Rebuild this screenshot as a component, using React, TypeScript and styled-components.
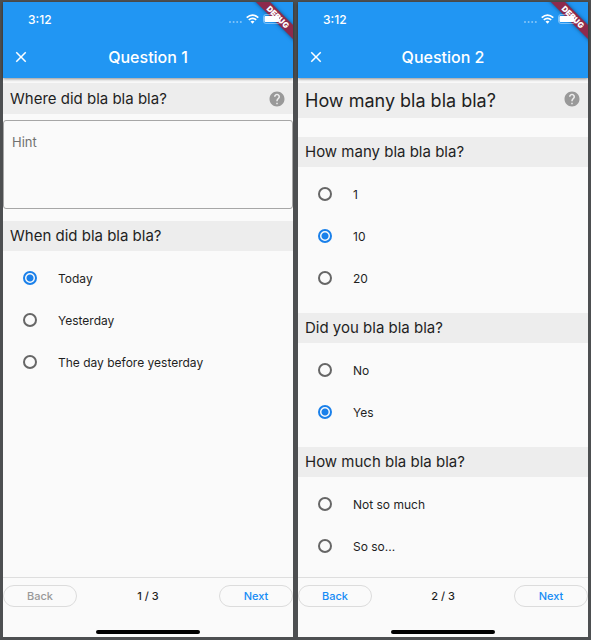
import React, { useId, useState } from "react";
import styled, { createGlobalStyle } from "styled-components";

const GlobalStyle = createGlobalStyle`
  *, *::before, *::after { box-sizing: border-box; }
  body {
    margin: 0;
    background: #4d4f51;
    color: #1f1f1f;
    font-family: Inter, "Liberation Sans", sans-serif;
  }
  button, input, textarea { font-family: inherit; }
`;

const Screens = styled.main`
  display: flex;
  gap: 5px;
  min-height: 100vh;
  padding: 2px 3px 3px;
`;

const Phone = styled.article`
  flex: 1;
  min-width: 0;
  display: flex;
  flex-direction: column;
  background: #fafafa;
`;

const Header = styled.header`
  position: relative;
  overflow: hidden;
  background: #2196f3;
  color: #fff;
`;

const HeaderShadow = styled.div`
  box-shadow: 0 1px 3px rgba(0, 0, 0, 0.45);
  margin-bottom: 5px;
`;

const StatusBar = styled.div`
  display: flex;
  justify-content: space-between;
  align-items: center;
  height: 34px;
  padding: 0 12px 0 25px;
`;

const Time = styled.time`
  font-size: 12px;
  font-weight: 500;
`;

const StatusIcons = styled.div`
  position: relative;
  z-index: 1;
  display: flex;
  align-items: center;
  gap: 4px;
`;

const DebugBanner = styled.div`
  position: absolute;
  top: 10px;
  right: -27px;
  width: 84px;
  height: 10px;
  transform: rotate(45deg);
  background: #8d2a4c;
  box-shadow: 0 0 4px rgba(0, 0, 0, 0.5);
  font-size: 8px;
  line-height: 10px;
  font-weight: 900;
  text-align: center;
`;

const AppBar = styled.div`
  display: grid;
  grid-template-columns: 36px 1fr 36px;
  align-items: center;
  height: 42px;
`;

const CloseButton = styled.button`
  display: grid;
  place-items: center;
  height: 36px;
  padding: 0;
  border: 0;
  background: none;
  color: inherit;
`;

const ScreenTitle = styled.h1`
  margin: 0;
  font-size: 16px;
  font-weight: 500;
  text-align: center;
`;

const Content = styled.div`
  flex: 1;
`;

const Bar = styled.div<{ $large?: boolean }>`
  display: flex;
  justify-content: space-between;
  align-items: center;
  min-height: ${(p) => (p.$large ? 35 : 31)}px;
  padding: 0 7px;
  background: #ededed;
`;

const BarTitle = styled.h2<{ $large?: boolean }>`
  margin: 0;
  font-size: ${(p) => (p.$large ? 18 : 15)}px;
  line-height: 20px;
  font-weight: 400;
`;

const HelpButton = styled.button`
  display: grid;
  place-items: center;
  align-self: flex-start;
  height: 31px;
  padding: 0;
  border: 0;
  background: none;
  color: #999;
`;

const Answer = styled.textarea`
  display: block;
  width: 100%;
  height: 89px;
  margin: 6px 0 12px;
  padding: 12px 8px;
  border: 1px solid #a6a6a6;
  border-radius: 3px;
  background: transparent;
  font-size: 13px;
  line-height: 18px;
  resize: none;
  &::placeholder { color: #717171; opacity: 1; }
`;

const Spacer = styled.div`
  height: 19px;
`;

const Group = styled.fieldset`
  min-width: 0;
  margin: 0;
  padding: 0 0 14px;
  border: 0;
  &:last-child { padding-bottom: 0; }
`;

const GroupTitle = styled.legend`
  display: block;
  width: 100%;
  height: 30px;
  margin-bottom: 6px;
  padding: 0 7px;
  background: #ededed;
  font-size: 15px;
  line-height: 30px;
`;

const Option = styled.label`
  display: flex;
  align-items: center;
  gap: 21px;
  height: 42px;
  padding-left: 20px;
  font-size: 12px;
`;

const Radio = styled.input`
  appearance: none;
  width: 14px;
  height: 14px;
  margin: 0;
  border: 2px solid #666;
  border-radius: 50%;
  &:checked {
    border-color: #1a80ea;
    background: radial-gradient(circle, #1a80ea 3px, transparent 4px);
  }
`;

const Footer = styled.footer`
  border-top: 1px solid #dedede;
`;

const Pager = styled.nav`
  display: grid;
  grid-template-columns: 74px 1fr 74px;
  align-items: center;
  padding-top: 7px;
`;

const PagerButton = styled.button`
  height: 22px;
  padding: 0;
  border: 1px solid #dcdcdc;
  border-radius: 11px;
  background: transparent;
  color: #168cf5;
  font-size: 11px;
  font-weight: 500;
  &:disabled { color: #999; }
`;

const PageCount = styled.span`
  font-size: 11px;
  font-weight: 500;
  text-align: center;
`;

const HomeIndicator = styled.div`
  width: 36%;
  height: 4px;
  margin: 23px auto 3px;
  border-radius: 2px;
  background: #000;
`;

function SignalIcons() {
  return (
    <StatusIcons>
      <svg width="13" height="10" viewBox="0 0 13 10" fill="#fff" opacity="0.45" aria-hidden="true">
        <circle cx="1" cy="8" r="1" />
        <circle cx="4.6" cy="8" r="1" />
        <circle cx="8.2" cy="8" r="1" />
        <circle cx="11.8" cy="8" r="1" />
      </svg>
      <svg width="13" height="10" viewBox="0 0 13 10" fill="none" stroke="#fff" strokeWidth="1.7" aria-hidden="true">
        <path d="M0.7 3.6Q6.5-1.4 12.3 3.6M2.8 5.9Q6.5 2.7 10.2 5.9" />
        <path d="M4.5 7.6Q6.5 6 8.5 7.6L6.5 9.8Z" fill="#fff" stroke="none" />
      </svg>
      <svg width="18" height="10" viewBox="0 0 18 10" aria-hidden="true">
        <rect x="0.5" y="0.5" width="17" height="9" rx="2.5" fill="none" stroke="#fff" opacity="0.4" />
        <rect x="1.5" y="2" width="14.5" height="6" rx="1" fill="#fff" />
      </svg>
    </StatusIcons>
  );
}

function TopBar({ title }: { title: string }) {
  return (
    <HeaderShadow>
      <Header>
        <StatusBar>
          <Time>3:12</Time>
          <SignalIcons />
        </StatusBar>
        <DebugBanner>DEBUG</DebugBanner>
        <AppBar>
          <CloseButton type="button" aria-label="Close">
            <svg width="18" height="18" viewBox="0 0 24 24" fill="currentColor" aria-hidden="true">
              <path d="M19 6.41 17.59 5 12 10.59 6.41 5 5 6.41 10.59 12 5 17.59 6.41 19 12 13.41 17.59 19 19 17.59 13.41 12z" />
            </svg>
          </CloseButton>
          <ScreenTitle>{title}</ScreenTitle>
        </AppBar>
      </Header>
    </HeaderShadow>
  );
}

function QuestionBar({ id, text, large }: { id?: string; text: string; large?: boolean }) {
  return (
    <Bar $large={large}>
      <BarTitle id={id} $large={large}>{text}</BarTitle>
      <HelpButton type="button" aria-label="Help">
        <svg width="18" height="18" viewBox="0 0 24 24" fill="currentColor" aria-hidden="true">
          <path d="M12 2C6.48 2 2 6.48 2 12s4.48 10 10 10 10-4.48 10-10S17.52 2 12 2zm1 17h-2v-2h2v2zm2.07-7.75l-.9.92C13.45 12.9 13 13.5 13 15h-2v-.5c0-1.1.45-2.1 1.17-2.83l1.24-1.26c.37-.36.59-.86.59-1.41 0-1.1-.9-2-2-2s-2 .9-2 2H8c0-2.21 1.79-4 4-4s4 1.79 4 4c0 .88-.36 1.68-.93 2.25z" />
        </svg>
      </HelpButton>
    </Bar>
  );
}

function Choices({ title, options, initial }: { title: string; options: string[]; initial?: string }) {
  const name = useId();
  const [value, setValue] = useState(initial);
  return (
    <Group>
      <GroupTitle>{title}</GroupTitle>
      {options.map((option) => (
        <Option key={option}>
          <Radio type="radio" name={name} checked={value === option} onChange={() => setValue(option)} />
          {option}
        </Option>
      ))}
    </Group>
  );
}

function BottomBar({ page, first }: { page: number; first?: boolean }) {
  return (
    <Footer>
      <Pager>
        <PagerButton type="button" disabled={first}>Back</PagerButton>
        <PageCount>{`${page} / 3`}</PageCount>
        <PagerButton type="button">Next</PagerButton>
      </Pager>
      <HomeIndicator />
    </Footer>
  );
}

export default function App() {
  return (
    <>
      <GlobalStyle />
      <Screens>
        <Phone>
          <TopBar title="Question 1" />
          <Content>
            <QuestionBar id="where" text="Where did bla bla bla?" />
            <Answer aria-labelledby="where" placeholder="Hint" />
            <Choices
              title="When did bla bla bla?"
              options={["Today", "Yesterday", "The day before yesterday"]}
              initial="Today"
            />
          </Content>
          <BottomBar page={1} first />
        </Phone>
        <Phone>
          <TopBar title="Question 2" />
          <Content>
            <QuestionBar text="How many bla bla bla?" large />
            <Spacer />
            <Choices title="How many bla bla bla?" options={["1", "10", "20"]} initial="10" />
            <Choices title="Did you bla bla bla?" options={["No", "Yes"]} initial="Yes" />
            <Choices title="How much bla bla bla?" options={["Not so much", "So so..."]} />
          </Content>
          <BottomBar page={2} />
        </Phone>
      </Screens>
    </>
  );
}
